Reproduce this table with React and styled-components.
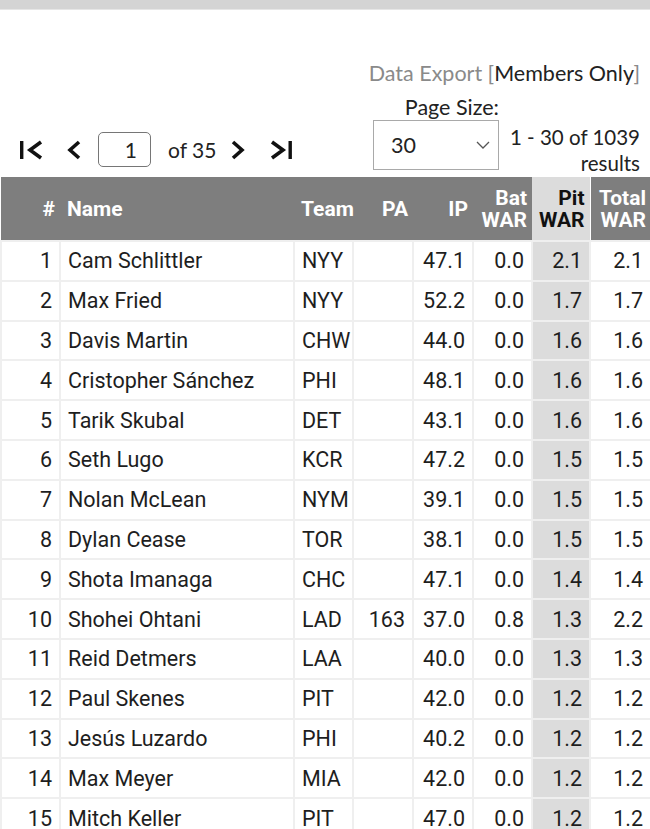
import React from "react";
import styled, { createGlobalStyle } from "styled-components";

const Global = createGlobalStyle`
  html, body { margin: 0; padding: 0; background: #fff; }
  body { font-family: "Roboto", "Liberation Sans", sans-serif; overflow: hidden; }
`;

const Page = styled.div`
  width: 650px;
`;

const TopBar = styled.div`
  height: 9px;
  background: #d4d4d4;
  border-bottom: 1px solid #e6e6e6;
`;

const Controls = styled.div`
  font-family: "Lato", "Liberation Sans", sans-serif;
  color: #222;
  padding: 50px 10px 0 0;
  height: 167px;
  box-sizing: border-box;
  display: flex;
  flex-direction: column;
`;

const ExportLine = styled.div`
  text-align: right;
  font-size: 21.5px;
  line-height: 26px;
  color: #8a8a8a;
  & b { font-weight: 400; color: #222; }
`;

const ControlRow = styled.div`
  display: flex;
  justify-content: space-between;
  align-items: flex-start;
  margin-top: 2px;
`;

const Pager = styled.div`
  display: flex;
  align-items: center;
  margin-top: 44px;
  padding-left: 20px;
  font-size: 21px;
`;

const IconBtn = styled.span`
  display: inline-flex;
  align-items: center;
  justify-content: center;
  margin-right: ${(p) => p.$mr || 0}px;
`;

const PageInput = styled.div`
  width: 53px;
  height: 35px;
  box-sizing: border-box;
  border: 1px solid #767676;
  border-radius: 5px;
  text-align: right;
  padding-right: 13px;
  font-size: 21px;
  line-height: 33px;
  margin-right: 17px;
`;

const OfText = styled.span`
  margin-right: 15px;
`;

const RightGroup = styled.div`
  display: flex;
  align-items: flex-start;
  margin-top: 7px;
`;

const SizeBlock = styled.div`
  display: flex;
  flex-direction: column;
  align-items: flex-end;
`;

const SizeLabel = styled.div`
  font-size: 21.5px;
  line-height: 24px;
`;

const Select = styled.div`
  width: 126px;
  height: 50px;
  box-sizing: border-box;
  border: 1px solid #a9a9a9;
  margin-top: 1px;
  display: flex;
  align-items: center;
  justify-content: space-between;
  padding: 0 8px 0 17px;
  font-size: 21.5px;
`;

const Results = styled.div`
  text-align: right;
  font-size: 20.5px;
  line-height: 26px;
  margin-left: 11px;
  margin-top: 29px;
`;

const Table = styled.table`
  width: 650px;
  border-collapse: collapse;
  table-layout: fixed;
  font-family: "Roboto", "Liberation Sans", sans-serif;
  font-size: 21.5px;
  color: #1e1e1e;
`;

const Th = styled.th`
  height: 63px;
  padding: 0 ${(p) => (p.$left ? 0 : 5)}px 0 ${(p) => (p.$left ? 7 : 0)}px;
  background: ${(p) => (p.$hl ? "#dcdcdc" : "#7e7e7e")};
  color: ${(p) => (p.$hl ? "#111" : "#fff")};
  font-weight: 700;
  font-size: 21px;
  line-height: 22px;
  text-align: ${(p) => (p.$left ? "left" : "right")};
  vertical-align: middle;
  white-space: nowrap;
  border-right: ${(p) => (p.$gap ? "1px solid #fff" : "none")};
`;

const Tr = styled.tr`
  height: 39.8px;
`;

const Td = styled.td`
  padding: 0 ${(p) => (p.$left ? 0 : 7)}px 0 ${(p) => (p.$left ? 7 : 0)}px;
  border: 2px solid #efefef;
  text-align: ${(p) => (p.$left ? "left" : "right")};
  background: ${(p) => (p.$hl ? "#dcdcdc" : "#fff")};
  white-space: nowrap;
  overflow: hidden;
  vertical-align: middle;
`;

const Chevron = ({ dir = "left", bar = false }) => {
  const w = bar ? 25 : 14;
  return (
    <svg width={w} height="22" viewBox={`0 0 ${w} 22`}>
      {dir === "left" ? (
        <>
          {bar && <rect x="0" y="2" width="3.4" height="18" fill="#111" />}
          <polyline
            points={bar ? "21,3 10,11 21,19" : "12,3 3,11 12,19"}
            fill="none"
            stroke="#111"
            strokeWidth="3.6"
          />
        </>
      ) : (
        <>
          <polyline
            points={bar ? "3,3 14,11 3,19" : "2,3 11,11 2,19"}
            fill="none"
            stroke="#111"
            strokeWidth="3.6"
          />
          {bar && <rect x="19.5" y="2" width="3.4" height="18" fill="#111" />}
        </>
      )}
    </svg>
  );
};

const rows = [
  [1, "Cam Schlittler", "NYY", "", "47.1", "0.0", "2.1", "2.1"],
  [2, "Max Fried", "NYY", "", "52.2", "0.0", "1.7", "1.7"],
  [3, "Davis Martin", "CHW", "", "44.0", "0.0", "1.6", "1.6"],
  [4, "Cristopher Sánchez", "PHI", "", "48.1", "0.0", "1.6", "1.6"],
  [5, "Tarik Skubal", "DET", "", "43.1", "0.0", "1.6", "1.6"],
  [6, "Seth Lugo", "KCR", "", "47.2", "0.0", "1.5", "1.5"],
  [7, "Nolan McLean", "NYM", "", "39.1", "0.0", "1.5", "1.5"],
  [8, "Dylan Cease", "TOR", "", "38.1", "0.0", "1.5", "1.5"],
  [9, "Shota Imanaga", "CHC", "", "47.1", "0.0", "1.4", "1.4"],
  [10, "Shohei Ohtani", "LAD", "163", "37.0", "0.8", "1.3", "2.2"],
  [11, "Reid Detmers", "LAA", "", "40.0", "0.0", "1.3", "1.3"],
  [12, "Paul Skenes", "PIT", "", "42.0", "0.0", "1.2", "1.2"],
  [13, "Jesús Luzardo", "PHI", "", "40.2", "0.0", "1.2", "1.2"],
  [14, "Max Meyer", "MIA", "", "42.0", "0.0", "1.2", "1.2"],
  [15, "Mitch Keller", "PIT", "", "47.0", "0.0", "1.2", "1.2"],
];

export default function App() {
  return (
    <Page>
      <Global />
      <TopBar />
      <Controls>
        <ExportLine>
          Data Export [<b>Members Only</b>]
        </ExportLine>
        <ControlRow>
          <Pager>
            <IconBtn $mr={22}>
              <Chevron dir="left" bar />
            </IconBtn>
            <IconBtn $mr={17}>
              <Chevron dir="left" />
            </IconBtn>
            <PageInput>1</PageInput>
            <OfText>of 35</OfText>
            <IconBtn $mr={24}>
              <Chevron dir="right" />
            </IconBtn>
            <IconBtn>
              <Chevron dir="right" bar />
            </IconBtn>
          </Pager>
          <RightGroup>
            <SizeBlock>
              <SizeLabel>Page Size:</SizeLabel>
              <Select>
                <span>30</span>
                <svg width="14" height="10" viewBox="0 0 14 10">
                  <polyline points="1,2 7,8 13,2" fill="none" stroke="#555" strokeWidth="1.3" />
                </svg>
              </Select>
            </SizeBlock>
            <Results>
              1 - 30 of 1039
              <br />
              results
            </Results>
          </RightGroup>
        </ControlRow>
      </Controls>
      <Table>
        <colgroup>
          <col style={{ width: 59 }} />
          <col style={{ width: 234 }} />
          <col style={{ width: 59 }} />
          <col style={{ width: 60 }} />
          <col style={{ width: 60 }} />
          <col style={{ width: 59 }} />
          <col style={{ width: 58 }} />
          <col style={{ width: 61 }} />
        </colgroup>
        <thead>
          <tr>
            <Th>#</Th>
            <Th $left>Name</Th>
            <Th $left>Team</Th>
            <Th>PA</Th>
            <Th>IP</Th>
            <Th>
              Bat
              <br />
              WAR
            </Th>
            <Th $hl $gap>
              Pit
              <br />
              WAR
            </Th>
            <Th>
              Total
              <br />
              WAR
            </Th>
          </tr>
        </thead>
        <tbody>
          {rows.map((r) => (
            <Tr key={r[0]}>
              <Td>{r[0]}</Td>
              <Td $left>{r[1]}</Td>
              <Td $left>{r[2]}</Td>
              <Td>{r[3]}</Td>
              <Td>{r[4]}</Td>
              <Td>{r[5]}</Td>
              <Td $hl>{r[6]}</Td>
              <Td>{r[7]}</Td>
            </Tr>
          ))}
        </tbody>
      </Table>
    </Page>
  );
}
